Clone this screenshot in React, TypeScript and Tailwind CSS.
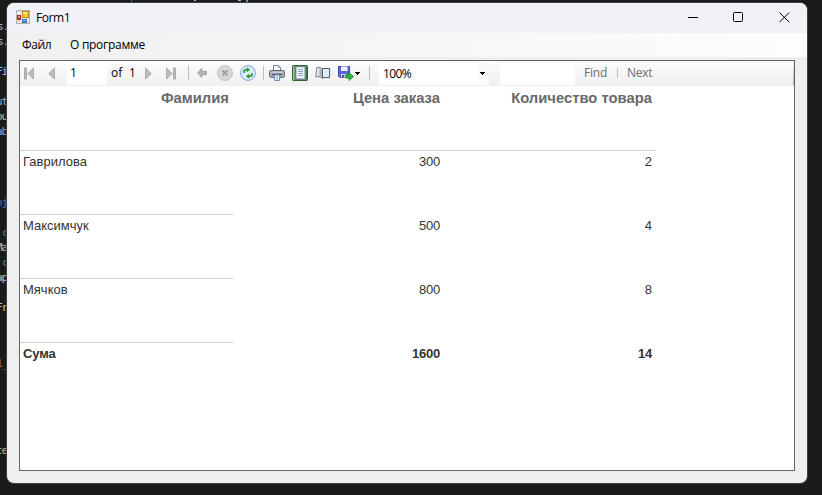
import React from "react";

const codeLines = [
  { top: 19, text: "s.", color: "text-[#b9bdc0]", left: "left-[-3px]" },
  { top: 34, text: "s.", color: "text-[#b9bdc0]", left: "left-[-3px]" },
  { top: 64, text: "Fi", color: "text-[#8fc2df]", left: "left-[-4px]" },
  { top: 94, text: "ut", color: "text-[#7cb4d6]", left: "left-[-4px]" },
  { top: 109, text: "ou", color: "text-[#c5c08e]", left: "left-[-4px]" },
  { top: 124, text: "ab", color: "text-[#7fa9cc]", left: "left-[-4px]" },
  { top: 195, text: "oj", color: "text-[#3c79b4]", left: "left-[-4px]" },
  { top: 225, text: "c", color: "text-[#4a9a44]", left: "left-[2px]" },
  { top: 240, text: "Ma", color: "text-[#b8babc]", left: "left-[-4px]" },
  { top: 255, text: "c", color: "text-[#4a9a44]", left: "left-[2px]" },
  { top: 270, text: "ap", color: "text-[#c5c3a0]", left: "left-[-4px]" },
  { top: 300, text: "Fr", color: "text-[#c5c3a0]", left: "left-[-4px]" },
  { top: 356, text: "l_", color: "text-[#b07038]", left: "left-[-3px]" },
  { top: 443, text: "te", color: "text-[#b8b596]", left: "left-[-4px]" },
];

const rows = [
  { name: "Гаврилова", price: "300", count: "2" },
  { name: "Максимчук", price: "500", count: "4" },
  { name: "Мячков", price: "800", count: "8" },
];

function Separator({ className }: { className: string }) {
  return <div className={`h-[14px] w-px shrink-0 bg-[#bdbdbd] ${className}`} />;
}

function FormIcon() {
  return (
    <svg width="14" height="14" viewBox="0 0 14 14" shapeRendering="crispEdges">
      <rect x=".5" y=".5" width="13" height="13" fill="#e4e2df" stroke="#b4b2b0" />
      <path d="M1 3.5H5M8 10.5H13M4.5 10V13" stroke="#fafafa" />
      <rect x="6.5" y="1.5" width="6" height="6" fill="#f8c933" stroke="#bd8a13" />
      <rect x="7" y="2" width="4" height="2" fill="#ffe98a" />
      <rect x="1" y="5" width="4" height="5" fill="#b72722" />
      <rect x="2" y="6" width="2" height="2" fill="#e88a72" />
      <rect x="6" y="9" width="5" height="4" fill="#3f76cf" />
      <rect x="7" y="10" width="3" height="1" fill="#8ab4ef" />
    </svg>
  );
}

function NavArrow({ bar = false, flip = false }: { bar?: boolean; flip?: boolean }) {
  const w = bar ? 10 : 7;
  return (
    <svg width={w} height="13" viewBox={`0 0 ${w} 13`} className={flip ? "-scale-x-100 shrink-0" : "shrink-0"}>
      {bar && <rect x=".5" y="1" width="2" height="11" fill="#bcbcbc" stroke="#a1a1a1" strokeWidth=".8" />}
      <path d={bar ? "M9.5 .9V12L4 6.5Z" : "M6.5 .9V12L.7 6.5Z"} fill="#bdbdbd" stroke="#a1a1a1" strokeWidth=".8" />
    </svg>
  );
}

function BackIcon() {
  return (
    <svg width="10" height="10" viewBox="0 0 10 10" className="shrink-0">
      <path d="M.6 5L4.6.6V3.2H9.4V6.8H4.6V9.4Z" fill="#b3b3b3" stroke="#989898" strokeWidth=".8" />
    </svg>
  );
}

function StopIcon() {
  return (
    <svg width="16" height="16" viewBox="0 0 16 16" className="shrink-0">
      <circle cx="8" cy="8" r="7.4" fill="#d8d8d8" stroke="#bdbdbd" />
      <path d="M5.3 5.3L10.7 10.7M10.7 5.3L5.3 10.7" stroke="#a4a4a4" strokeWidth="2.1" />
    </svg>
  );
}

function RefreshIcon() {
  return (
    <svg width="16" height="16" viewBox="0 0 16 16" className="shrink-0">
      <circle cx="8" cy="8" r="7.4" fill="#dcedfb" stroke="#7ea2d2" />
      <path d="M4 8V6.6Q4 4.7 6 4.7H7.5" fill="none" stroke="#25962b" strokeWidth="1.6" />
      <path d="M6.6 2.2L10.2 4.7L6.6 7.2Z" fill="#25962b" />
      <path d="M12 8V9.4Q12 11.3 10 11.3H8.5" fill="none" stroke="#25962b" strokeWidth="1.6" />
      <path d="M9.4 8.8L5.8 11.3L9.4 13.8Z" fill="#25962b" />
    </svg>
  );
}

function PrintIcon() {
  return (
    <svg width="16" height="16" viewBox="0 0 16 16" className="shrink-0">
      <path d="M4.5 6V.5H9.5L11.5 2.5V6" fill="#f7fbff" stroke="#7d8690" />
      <path d="M9.5.5V2.5H11.5" fill="none" stroke="#8a929a" strokeWidth=".7" />
      <rect x=".5" y="5.5" width="15" height="7" rx="1.8" fill="#a9adb3" stroke="#62676e" />
      <path d="M2 7.2H14" stroke="#d8dade" />
      <path d="M3 9.5H13" stroke="#555a61" strokeWidth="1.5" />
      <path d="M5.5 10H10.5V15.5H5.5Z" fill="#edf6ff" stroke="#6f93bd" />
      <path d="M7 12H9M7 13.7H9" stroke="#67a7e6" />
    </svg>
  );
}

function LayoutIcon() {
  return (
    <svg width="16" height="16" viewBox="0 0 16 16" className="shrink-0">
      <rect x=".5" y=".5" width="15" height="15" rx=".8" fill="#6a9c6c" stroke="#2f6336" />
      <path d="M1.5 1.5V14.5" stroke="#a5caa6" />
      <path d="M14.5 1.5V14.5" stroke="#3d7443" />
      <rect x="4" y="1.8" width="9" height="12.2" fill="#f6faff" stroke="#5d7488" strokeWidth=".8" />
      <path d="M6 4.5H11.2M6 6.5H11.2M6 8.5H11.2M6 10.5H11.2" stroke="#8ba4bd" />
    </svg>
  );
}

function PageSetupIcon() {
  return (
    <svg width="16" height="16" viewBox="0 0 16 16" className="shrink-0">
      <path d="M1.8 2.5H5.2L7.5 4V13.5L5 11.8H.8Z" fill="#cfd7df" stroke="#737d87" strokeWidth=".9" />
      <path d="M4.8 3.2V11.2L7.3 13V4.6Z" fill="#aab4be" />
      <path d="M7.5 3.5H14.6V12.6H7.5Z" fill="#dbe9f7" stroke="#4d5964" />
      <path d="M8.5 4.5V11.8" stroke="#f8fbff" />
      <path d="M2.5 4V10.5" stroke="#f3f6f9" />
    </svg>
  );
}

function SaveIcon() {
  return (
    <svg width="16" height="16" viewBox="0 0 16 16" className="shrink-0">
      <path d="M.5 1.5H11.5V12.5H1.8L.5 11.2Z" fill="#5a68d8" stroke="#4349ad" />
      <path d="M3 1.5H9.5V6H3Z" fill="#eef4ff" />
      <path d="M3 9H9V12.5H3Z" fill="#d5daf0" />
      <path d="M4 10H5.8V12.5H4Z" fill="#343b8b" />
      <path d="M7 10H10.3V7.2L15.5 11.4L11.3 15.5V13.2H8.5Z" fill="#2eb83a" stroke="#168226" strokeWidth=".8" />
    </svg>
  );
}

function DropArrow() {
  return (
    <svg width="5" height="3" viewBox="0 0 5 3" className="shrink-0" shapeRendering="crispEdges">
      <path d="M0 0H5V1H4V2H3V3H2V2H1V1H0Z" fill="#000" />
    </svg>
  );
}

function Toolbar() {
  return (
    <div className="flex h-[25px] items-center bg-gradient-to-b from-[#fcfcfc] to-[#f0f0f0] pb-px font-['Open_Sans','Noto_Sans',sans-serif] text-[12px] leading-[16px] text-black">
      <div className="ml-1 flex"><NavArrow bar /></div>
      <div className="ml-[14px] flex"><NavArrow /></div>
      <div className="ml-3 flex h-6 w-10 shrink-0 self-start bg-white pl-[3px] pt-1">1</div>
      <span className="ml-1 w-[18px] shrink-0">of</span>
      <span className="w-4 shrink-0">1</span>
      <NavArrow flip />
      <div className="ml-[14px] flex"><NavArrow bar flip /></div>
      <Separator className="ml-3" />
      <div className="ml-2 flex"><BackIcon /></div>
      <div className="ml-[10px] flex"><StopIcon /></div>
      <div className="ml-[7px] flex"><RefreshIcon /></div>
      <Separator className="ml-[7px]" />
      <div className="ml-[5px] flex gap-[7px]">
        <PrintIcon />
        <LayoutIcon />
        <PageSetupIcon />
        <SaveIcon />
      </div>
      <div className="ml-px flex"><DropArrow /></div>
      <Separator className="ml-[9px]" />
      <div className="ml-[9px] flex h-6 w-[110px] shrink-0 items-center justify-between self-start bg-white pl-1">
        <span className="pt-px tracking-[-0.6px]">100%</span>
        <div className="flex h-[21px] w-[11px] items-center justify-center bg-[#fafafa] pr-[2px]"><DropArrow /></div>
      </div>
      <div className="ml-[11px] h-6 w-[75px] shrink-0 self-start bg-white" />
      <span className="ml-[9px] w-[33px] shrink-0 tracking-[-0.2px] text-[#6d6d6d]">Find</span>
      <div className="h-[10px] w-px bg-[#bdbdbd]" />
      <span className="ml-[9px] tracking-[-0.3px] text-[#6d6d6d]">Next</span>
      <div className="ml-auto h-full w-px bg-gradient-to-b from-[#f5f5f5] to-[#a5a5a5]" />
    </div>
  );
}

function Report() {
  return (
    <div className="font-['Liberation_Sans',Arial,sans-serif] text-[13px] leading-[16px] text-[#333]">
      <div className="grid h-[65px] w-[636px] grid-cols-[213px_211px_212px] border-b border-[#d3d3d3] pt-1 text-right text-[14.8px] font-bold text-[#696969]">
        <div className="pr-1">Фамилия</div>
        <div className="pr-1">Цена заказа</div>
        <div className="pr-1">Количество товара</div>
      </div>
      {rows.map((row) => (
        <div key={row.name} className="grid h-16 w-[636px] grid-cols-[213px_211px_212px]">
          <div className="border-b border-[#d3d3d3] pl-[3px] pt-[3px]">{row.name}</div>
          <div className="pr-1 pt-[3px] text-right tracking-[-0.2px]">{row.price}</div>
          <div className="pr-1 pt-[3px] text-right">{row.count}</div>
        </div>
      ))}
      <div className="grid h-16 w-[636px] grid-cols-[213px_211px_212px] font-bold">
        <div className="pl-[3px] pt-[3px] tracking-[-0.1px]">Сума</div>
        <div className="pr-1 pt-[3px] text-right tracking-[-0.2px]">1600</div>
        <div className="pr-1 pt-[3px] text-right tracking-[-0.2px]">14</div>
      </div>
    </div>
  );
}

export default function App() {
  return (
    <div className="relative h-[495px] w-[822px] overflow-hidden bg-[#1b1b1b] pl-[6px] pt-[2px]">
      {codeLines.map((line) => (
        <span
          key={line.top}
          className={`absolute font-['DejaVu_Sans_Mono',monospace] text-[11px] leading-[16px] tracking-[-1px] ${line.left} ${line.color}`}
          style={{ top: line.top }}
        >
          {line.text}
        </span>
      ))}
      <div className="absolute left-[131px] top-0 h-[2px] w-px bg-[#268080]" />
      <div className="absolute left-[194px] top-0 h-px w-[2px] bg-[#b7bcc5]" />
      <div className="absolute left-[238px] top-0 h-px w-[3px] bg-[#b7bcc5]" />
      <div className="absolute left-[246px] top-0 h-[3px] w-[2px] bg-[#6b91ad]" />
      <div className="relative flex h-[482px] w-[802px] flex-col overflow-hidden rounded-[8px] border border-[#404040] bg-[#efefef]">
        <header className="flex h-[30px] shrink-0 items-center bg-[#f0f2f8] font-['Open_Sans','Noto_Sans',sans-serif] text-[12px] text-black">
          <div className="ml-[9px] pb-0.5"><FormIcon /></div>
          <span className="ml-[6px] leading-4 tracking-[-0.4px]">Form1</span>
          <svg width="11" height="11" viewBox="0 0 11 11" className="ml-auto mb-0.5"><path d="M0 5.5H10" stroke="#000" /></svg>
          <svg width="11" height="11" viewBox="0 0 11 11" className="ml-[34px] mb-0.5"><rect x=".5" y=".5" width="9" height="9" rx="1" fill="none" stroke="#000" /></svg>
          <svg width="11" height="11" viewBox="0 0 11 11" className="ml-[35px] mr-[17px] mb-0.5"><path d="M.5.5L10.2 10.2M10.2.5L.5 10.2" stroke="#000" /></svg>
        </header>
        <nav className="flex h-6 shrink-0 items-center bg-gradient-to-r from-[#f0f0f0] to-[#fdfdfd] pl-[15px] font-['Open_Sans','Noto_Sans',sans-serif] text-[12px] leading-4 text-black">
          <span className="w-12 shrink-0 tracking-[-0.4px]">Файл</span>
          <span className="tracking-[-0.28px]">О программе</span>
        </nav>
        <main className="ml-3 mt-[3px] h-[411px] w-[776px] shrink-0 border border-[#646464] bg-white">
          <Toolbar />
          <Report />
        </main>
      </div>
    </div>
  );
}
